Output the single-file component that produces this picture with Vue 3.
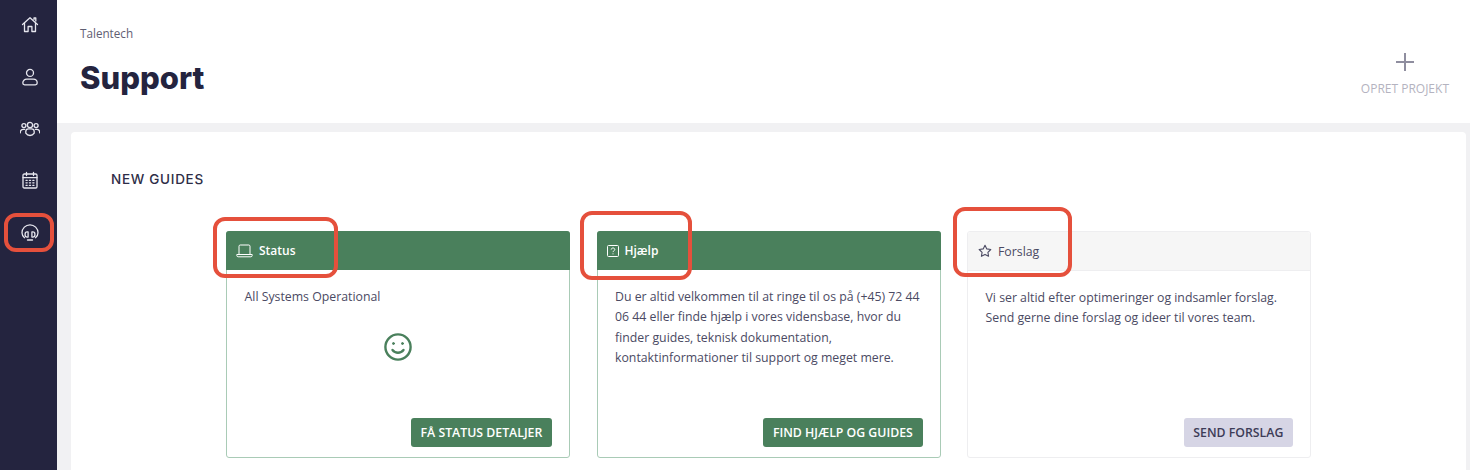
<template>
  <div class="page">
    <nav class="sidebar">
      <a v-for="item in navItems" :key="item.name" class="nav-item" :class="{ active: item.active }">
        <svg width="20" height="20" viewBox="0 0 20 20" fill="none" stroke="currentColor" stroke-width="1.3" stroke-linecap="round" stroke-linejoin="round">
          <path v-for="(d, i) in item.paths" :key="i" :d="d" />
        </svg>
      </a>
    </nav>

    <div class="content">
      <header class="topbar">
        <div>
          <div class="crumb">Talentech</div>
          <h1>Support</h1>
        </div>
        <div class="create">
          <svg width="20" height="20" viewBox="0 0 20 20" stroke="#8f8e9f" stroke-width="2"><path d="M10 1v18M1 10h18" /></svg>
          <span>OPRET PROJEKT</span>
        </div>
      </header>

      <main class="body">
        <section class="panel">
          <h2>NEW GUIDES</h2>
          <div class="cards">
            <article class="card green">
              <div class="card-head">
                <svg class="head-icon" width="17" height="14" viewBox="0 0 17 14" fill="none" stroke="currentColor" stroke-width="1">
                  <path d="M3 10V2.2C3 1.5 3.5 1 4.2 1h8.6c.7 0 1.2.5 1.2 1.2V10" />
                  <path d="M.8 10.5h15.4v1c0 .8-.6 1.3-1.3 1.3H2.1c-.7 0-1.3-.5-1.3-1.3z" />
                </svg>
                Status
              </div>
              <div class="card-body">
                <p>All Systems Operational</p>
                <div class="smiley">
                  <svg width="30" height="30" viewBox="0 0 30 30" fill="none" stroke="#4a805c" stroke-width="2.4" stroke-linecap="round">
                    <circle cx="15" cy="15" r="12.6" />
                    <path d="M9.5 18c2.8 3.6 8.2 3.6 11 0" />
                    <circle cx="10.5" cy="11.5" r="1" fill="#4a805c" stroke-width="1" />
                    <circle cx="19.5" cy="11.5" r="1" fill="#4a805c" stroke-width="1" />
                  </svg>
                </div>
                <button class="btn">FÅ STATUS DETALJER</button>
              </div>
              <span class="mark mark-status"></span>
            </article>

            <article class="card green">
              <div class="card-head">
                <svg class="head-icon" width="12" height="12" viewBox="0 0 12 12" fill="none" stroke="currentColor" stroke-width="1">
                  <rect x=".5" y=".5" width="11" height="11" rx="1" />
                  <path d="M4.2 4.6C4.2 3.6 5 3 6 3s1.8.6 1.8 1.5c0 1.3-1.8 1.3-1.8 2.6" />
                  <path d="M6 8.4v.9" />
                </svg>
                Hjælp
              </div>
              <div class="card-body">
                <p>Du er altid velkommen til at ringe til os på (+45) 72 44 06 44 eller finde hjælp i vores vidensbase, hvor du finder guides, teknisk dokumentation, kontaktinformationer til support og meget mere.</p>
                <button class="btn">FIND HJÆLP OG GUIDES</button>
              </div>
              <span class="mark mark-help"></span>
            </article>

            <article class="card plain">
              <div class="card-head">
                <svg class="head-icon" width="14" height="14" viewBox="0 0 14 14" fill="none" stroke="currentColor" stroke-width="1.1" stroke-linejoin="round">
                  <path d="M7 1.2l1.8 3.7 4 .6-2.9 2.8.7 4L7 10.4l-3.6 1.9.7-4L1.2 5.5l4-.6z" />
                </svg>
                Forslag
              </div>
              <div class="card-body">
                <p>Vi ser altid efter optimeringer og indsamler forslag. Send gerne dine forslag og ideer til vores team.</p>
                <button class="btn">SEND FORSLAG</button>
              </div>
              <span class="mark mark-idea"></span>
            </article>
          </div>
        </section>
      </main>
    </div>
  </div>
</template>

<script setup>
const navItems = [
  {
    name: 'home',
    paths: ['M2.5 9.5L10 2.8l7.5 6.7', 'M4.5 8v8.5h3.6v-5h3.8v5h3.6V8', 'M14 4.5V3h1.8v3'],
  },
  {
    name: 'user',
    paths: ['M10 2.4a3.5 3.5 0 1 0 0 7 3.5 3.5 0 0 0 0-7z', 'M4.6 17.8h10.800c1 0 1.800-.7 1.800-1.700 0-2.500-1.800-3.900-3.900-3.900H6.700c-2.100 0-3.900 1.400-3.900 3.900 0 1 .8 1.700 1.800 1.700z'],
  },
  {
    name: 'team',
    paths: [
      'M10 3.400a2.600 2.600 0 1 0 0 5.200 2.600 2.600 0 0 0 0-5.200z',
      'M3.900 4.600a2 2 0 1 0 0 4 2 2 0 0 0 0-4z',
      'M16.100 4.600a2 2 0 1 0 0 4 2 2 0 0 0 0-4z',
      'M5.800 14.200v-1.700c0-1.600 1.200-2.700 2.700-2.700h3c1.500 0 2.700 1.100 2.700 2.700v1.700c-1 1.500-2.500 2.300-4.200 2.300s-3.200-.8-4.200-2.300z',
      'M.3 13.800c-.1-2.200 1.100-3.500 2.900-3.500h1.500',
      'M19.700 13.800c.1-2.200-1.100-3.500-2.900-3.500h-1.500',
    ],
  },
  {
    name: 'calendar',
    paths: [
      'M4.300 3h11.400c.8 0 1.300.5 1.300 1.300v11.400c0 .8-.5 1.300-1.300 1.300H4.300c-.8 0-1.300-.5-1.300-1.300V4.300C3 3.500 3.500 3 4.300 3z',
      'M6.500 1.500v3M13.500 1.500v3M3 6.600h14',
      'M6 9.300h1.200M9.400 9.300h1.200M12.800 9.300h1.200',
      'M6 11.800h1.200M9.400 11.800h1.200M12.800 11.800h1.200',
      'M6 14.300h1.200M9.400 14.300h1.200M12.800 14.300h1.200',
    ],
  },
  {
    name: 'support',
    active: true,
    paths: [
      'M4.500 14.700C2.800 13.500 2 11.800 2 9.800a8 8 0 0 1 16 0c0 2-.8 3.700-2.500 4.900',
      'M7.200 8.900c-1.300 0-2.100.8-2.100 2v1.200c0 1.200.8 2 2.100 2h.9V8.900z',
      'M12.800 8.900c1.300 0 2.100.8 2.100 2v1.200c0 1.200-.8 2-2.100 2h-.9V8.900z',
      'M7.500 17h5',
    ],
  },
]
</script>

<style>
html, body {
  margin: 0;
  background: #f1f1f3;
}
</style>

<style scoped>
.page {
  display: flex;
  height: 470px;
  overflow: hidden;
  font-family: "Open Sans", sans-serif;
  color: #4b4a63;
}

.sidebar {
  width: 57px;
  flex-shrink: 0;
  background: #24243f;
  display: flex;
  flex-direction: column;
  align-items: center;
  padding: 14.500px 0 0 2px;
  box-sizing: border-box;
}

.nav-item {
  position: relative;
  height: 20px;
  margin-bottom: 32px;
  color: #e6e6ee;
  display: block;
}

.nav-item.active::after {
  content: "";
  position: absolute;
  left: -16px;
  top: -9.500px;
  width: 50px;
  height: 39px;
  box-sizing: border-box;
  border: 4px solid #e5503c;
  border-radius: 12px;
}

.content {
  flex: 1;
  min-width: 0;
  display: flex;
  flex-direction: column;
}

.topbar {
  height: 123px;
  flex-shrink: 0;
  background: #fff;
  display: flex;
  justify-content: space-between;
  padding: 25px 21px 0 23px;
  box-sizing: border-box;
}

.crumb {
  font-size: 11.700px;
  line-height: 16px;
  color: #5f5e72;
}

h1 {
  margin: 19px 0 0;
  font-family: Inter, sans-serif;
  font-size: 31px;
  line-height: 36px;
  font-weight: 800;
  color: #24243f;
}

.create {
  display: flex;
  flex-direction: column;
  align-items: center;
  gap: 9px;
  padding-top: 27px;
  font-size: 12px;
  line-height: 15px;
  color: #b4b3c0;
}

.body {
  flex: 1;
  padding: 9px 4px 0 14px;
  min-height: 0;
}

.panel {
  height: 100%;
  background: #fff;
  border-radius: 4px 4px 0 0;
  padding: 39px 40px 0;
  box-sizing: border-box;
}

h2 {
  margin: 0;
  font-family: Inter, sans-serif;
  font-size: 13.500px;
  line-height: 16px;
  font-weight: 500;
  letter-spacing: .7px;
  color: #2e2d47;
}

.cards {
  display: grid;
  grid-template-columns: repeat(3, 344px);
  justify-content: center;
  column-gap: 26.500px;
  margin-top: 44px;
}

.card {
  position: relative;
  height: 227px;
  box-sizing: border-box;
  border: 1px solid #a9cbb6;
  border-radius: 3px;
  display: flex;
  flex-direction: column;
}

.card.plain {
  border-color: #eeeef0;
}

.card-head {
  height: 39px;
  flex-shrink: 0;
  display: flex;
  align-items: center;
  gap: 6px;
  padding-left: 10px;
  font-size: 12px;
  font-weight: 600;
  margin: -1px -1px 0;
  border-radius: 3px 3px 0 0;
}

.green .card-head {
  background: #4a805c;
  color: #fff;
}

.plain .card-head {
  background: #f6f6f6;
  color: #4b4a63;
  font-size: 12.300px;
  font-weight: 400;
  border-bottom: 1px solid #eeeef0;
  box-sizing: border-box;
  margin: 0;
  padding-left: 10px;
  gap: 6px;
}

.head-icon {
  flex-shrink: 0;
}

.card-body {
  flex: 1;
  position: relative;
  padding: 17px 17.500px 0;
}

.card-body p {
  margin: 0;
  font-size: 12.300px;
  line-height: 20.300px;
  color: #4b4a63;
}

.smiley {
  display: flex;
  justify-content: center;
  margin-top: 25.200px;
}

.smiley svg {
  display: block;
}

.btn {
  position: absolute;
  right: 17px;
  bottom: 10px;
  height: 29px;
  padding: 0 9.700px;
  border: 0;
  border-radius: 3px;
  background: #4a805c;
  color: #fff;
  font-family: "Open Sans", sans-serif;
  font-size: 12.300px;
  font-weight: 600;
}

.plain .btn {
  background: #d6d5e5;
  color: #3d3c57;
}

.mark {
  position: absolute;
  box-sizing: border-box;
  border: 4px solid #e5503c;
  border-radius: 12px;
  pointer-events: none;
}

.mark-status {
  left: -14px;
  top: -15px;
  width: 125px;
  height: 61px;
}

.mark-help {
  left: -18px;
  top: -21px;
  width: 112px;
  height: 69px;
}

.mark-idea {
  left: -15px;
  top: -25px;
  width: 119px;
  height: 70px;
}
</style>
